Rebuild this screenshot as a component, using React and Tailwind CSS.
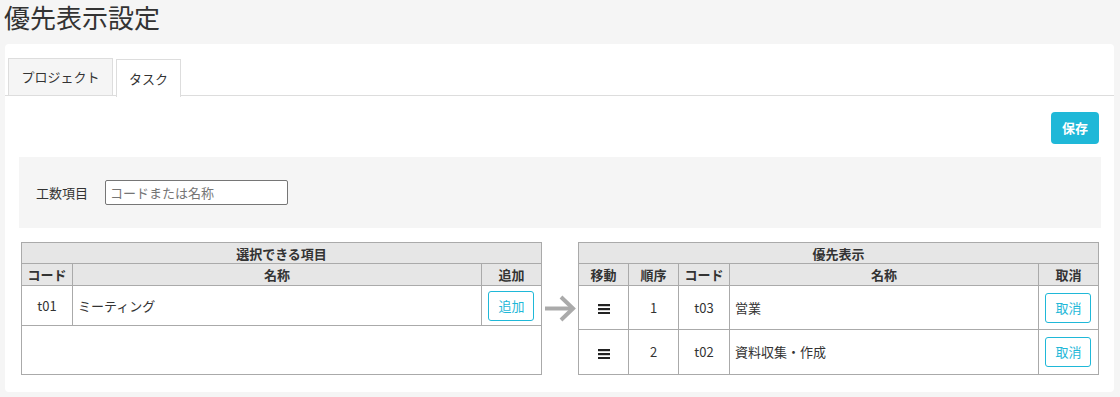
const FONT = { fontFamily: '"Noto Sans CJK JP", "Noto Sans", sans-serif' };

const available = [{ code: 't01', name: 'ミーティング' }];
const priority = [
  { order: 1, code: 't03', name: '営業' },
  { order: 2, code: 't02', name: '資料収集・作成' },
];

function Bars() {
  return (
    <svg width="12" height="10" viewBox="0 0 12 10" className="inline-block">
      <rect x="0" y="0" width="12" height="2.2" fill="#222" />
      <rect x="0" y="4" width="12" height="2.2" fill="#222" />
      <rect x="0" y="8" width="12" height="2.2" fill="#222" />
    </svg>
  );
}

function OutlineButton({ children }) {
  return (
    <button className="w-[46px] h-[30px] border border-[#1fb8d8] rounded-[3px] text-[13px] text-[#1fb8d8] bg-white">
      {children}
    </button>
  );
}

export default function App() {
  return (
    <div className="w-[1120px] h-[397px] overflow-hidden bg-[#f5f5f5] text-[#333]" style={FONT}>
      <h1 className="h-[44px] pl-[4px] pt-[1px] text-[26px] leading-[32px] font-normal text-[#333]">優先表示設定</h1>

      {/* Card */}
      <div className="ml-[5px] w-[1109px] h-[348px] bg-white rounded-[4px] pt-[14px]">
        {/* Tabs */}
        <div className="flex gap-[3px] pl-[3px] h-[38px] border-b border-[#ddd]">
          <div className="w-[105px] h-[37px] flex items-center justify-center bg-[#f5f5f5] border border-[#ddd] border-b-0 text-[13px]">
            プロジェクト
          </div>
          <div className="w-[65px] h-[38px] flex items-center justify-center bg-white border border-[#ddd] border-b-0 text-[13px] relative top-[1px]">
            タスク
          </div>
        </div>

        <div className="pl-[14px] pr-[8px]">
          <div className="flex justify-end pt-[16px] pr-[7px]">
            <button className="w-[48px] h-[32px] rounded-[4px] bg-[#1fb8d8] text-white text-[13px] font-bold">保存</button>
          </div>

          {/* Filter */}
          <div className="mt-[13px] h-[71px] w-[1082px] bg-[#f5f5f5] flex items-center pl-[17px]">
            <span className="text-[13px] w-[69px]">工数項目</span>
            <input
              className="w-[183px] h-[25px] border border-[#767676] rounded-[2px] px-[4px] text-[13px] bg-white placeholder:text-[#757575] outline-none"
              placeholder="コードまたは名称"
            />
          </div>

          {/* Tables */}
          <div className="mt-[14px] pl-[2px] flex items-stretch text-[13px]">
            <table className="w-[521px] border-collapse border border-[#aaa] table-fixed">
              <colgroup>
                <col className="w-[51px]" />
                <col />
                <col className="w-[60px]" />
              </colgroup>
              <thead>
                <tr className="h-[21px] bg-[#e6e6e6]">
                  <th colSpan={3} className="border border-[#aaa] font-bold leading-[19px]">選択できる項目</th>
                </tr>
                <tr className="h-[22px] bg-[#e6e6e6]">
                  <th className="border border-[#aaa] font-bold leading-[20px]">コード</th>
                  <th className="border border-[#aaa] font-bold leading-[20px]">名称</th>
                  <th className="border border-[#aaa] font-bold leading-[20px]">追加</th>
                </tr>
              </thead>
              <tbody>
                {available.map((r) => (
                  <tr key={r.code} className="h-[40px]">
                    <td className="border border-[#aaa] text-center">{r.code}</td>
                    <td className="border border-[#aaa] pl-[5px]">{r.name}</td>
                    <td className="border border-[#aaa] text-center align-middle">
                      <OutlineButton>追加</OutlineButton>
                    </td>
                  </tr>
                ))}
                <tr>
                  <td colSpan={3} className="border border-[#aaa]"></td>
                </tr>
              </tbody>
            </table>

            <div className="w-[36px] flex items-start justify-center pt-[53px]">
              <svg width="31" height="28" viewBox="0 0 31 28">
                <path d="M0 13.5 H27" stroke="#aaa" strokeWidth="4" fill="none" />
                <path d="M16 2 L28 13.5 L16 25" stroke="#aaa" strokeWidth="4" fill="none" />
              </svg>
            </div>

            <table className="w-[521px] border-collapse border border-[#aaa] table-fixed">
              <colgroup>
                <col className="w-[50px]" />
                <col className="w-[50px]" />
                <col className="w-[51px]" />
                <col />
                <col className="w-[60px]" />
              </colgroup>
              <thead>
                <tr className="h-[21px] bg-[#e6e6e6]">
                  <th colSpan={5} className="border border-[#aaa] font-bold leading-[19px]">優先表示</th>
                </tr>
                <tr className="h-[22px] bg-[#e6e6e6]">
                  <th className="border border-[#aaa] font-bold leading-[20px]">移動</th>
                  <th className="border border-[#aaa] font-bold leading-[20px]">順序</th>
                  <th className="border border-[#aaa] font-bold leading-[20px]">コード</th>
                  <th className="border border-[#aaa] font-bold leading-[20px]">名称</th>
                  <th className="border border-[#aaa] font-bold leading-[20px]">取消</th>
                </tr>
              </thead>
              <tbody>
                {priority.map((r, i) => (
                  <tr key={r.code} className={i === 0 ? 'h-[44px]' : 'h-[45px]'}>
                    <td className="border border-[#aaa] text-center"><Bars /></td>
                    <td className="border border-[#aaa] text-center">{r.order}</td>
                    <td className="border border-[#aaa] text-center">{r.code}</td>
                    <td className="border border-[#aaa] pl-[5px]">{r.name}</td>
                    <td className="border border-[#aaa] text-center align-middle">
                      <OutlineButton>取消</OutlineButton>
                    </td>
                  </tr>
                ))}
              </tbody>
            </table>
          </div>
        </div>
      </div>
    </div>
  );
}
